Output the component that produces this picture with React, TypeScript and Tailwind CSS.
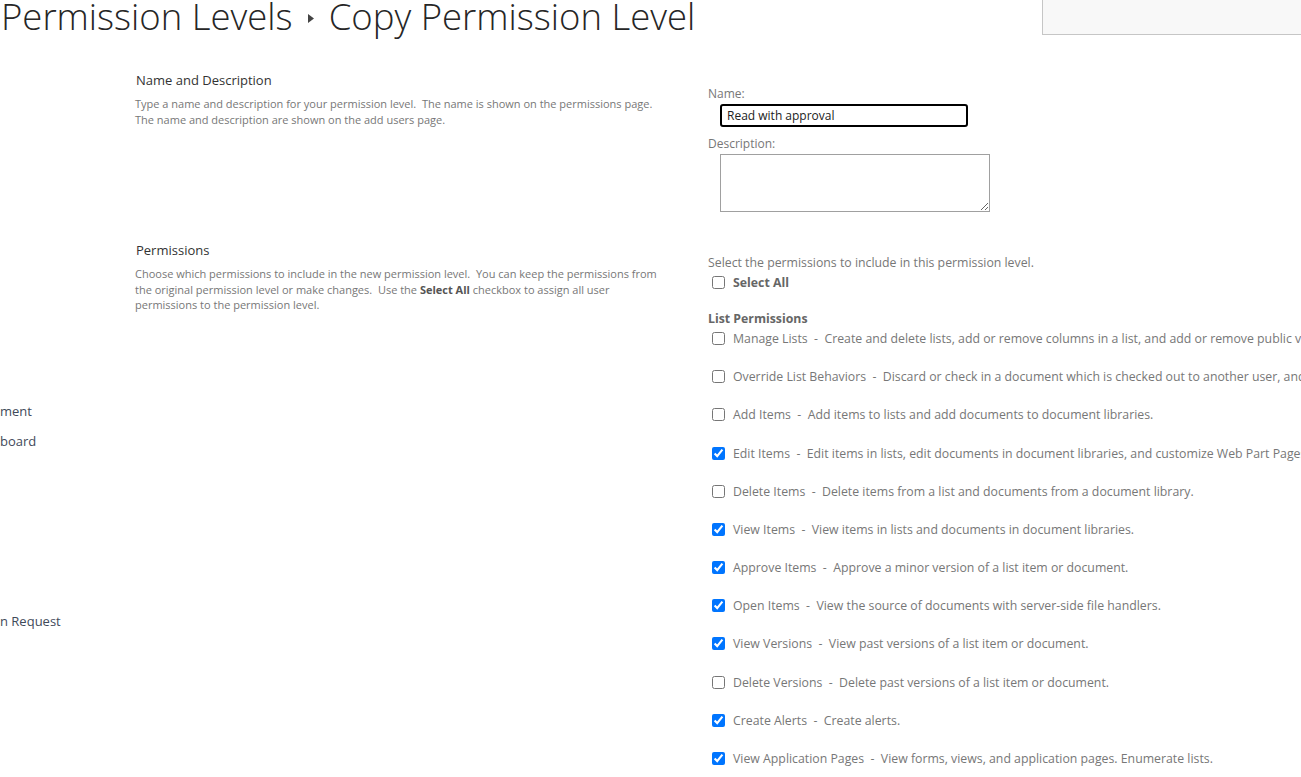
const perms: [string, string, boolean][] = [
  ["Manage Lists", "Create and delete lists, add or remove columns in a list, and add or remove public views of a list.", false],
  ["Override List Behaviors", "Discard or check in a document which is checked out to another user, and change or override settings which allow users to read/edit only their own items", false],
  ["Add Items", "Add items to lists and add documents to document libraries.", false],
  ["Edit Items", "Edit items in lists, edit documents in document libraries, and customize Web Part Pages in document libraries.", true],
  ["Delete Items", "Delete items from a list and documents from a document library.", false],
  ["View Items", "View items in lists and documents in document libraries.", true],
  ["Approve Items", "Approve a minor version of a list item or document.", true],
  ["Open Items", "View the source of documents with server-side file handlers.", true],
  ["View Versions", "View past versions of a list item or document.", true],
  ["Delete Versions", "Delete past versions of a list item or document.", false],
  ["Create Alerts", "Create alerts.", true],
  ["View Application Pages", "View forms, views, and application pages. Enumerate lists.", true],
];

const PermRow = ({ name, desc, checked }: { name: string; desc: string; checked: boolean }) => (
  <div className="flex h-[38.18px] items-start whitespace-nowrap">
    <input type="checkbox" defaultChecked={checked} className="mt-[2px] ml-[4px] h-[13px] w-[13px] shrink-0" />
    <span className="ml-[8px] leading-[18px]">
      {name}&nbsp; - &nbsp;{desc}
    </span>
  </div>
);

export default function App() {
  return (
    <div
      className="relative h-[777px] w-[1301px] overflow-hidden bg-white text-[#777]"
      style={{ fontFamily: '"Open Sans", "Noto Sans", sans-serif' }}
    >
      <div className="flex h-[60px] items-start">
        <h1 className="ml-[1px] mt-[-9px] flex items-center whitespace-nowrap text-[36.5px] font-light leading-[50px] text-[#262626]">
          Permission Levels
          <svg width="6" height="9" viewBox="0 0 6 9" className="mx-[15px] mt-[4px]">
            <path d="M0 0 L6 4.5 L0 9 Z" fill="#444" />
          </svg>
          Copy Permission Level
        </h1>
        <div className="ml-auto h-[35px] w-[259px] border-b border-l border-[#c6c6c6] bg-[#f8f8f8]" />
      </div>

      <div className="flex">
        {/* left nav, scrolled out of view */}
        <div className="w-[135px] shrink-0 text-[13px] text-[#3f4a5a]">
          <div className="mt-[342px] leading-[18px]">ment</div>
          <div className="mt-[12px] leading-[18px]">board</div>
          <div className="mt-[162px] leading-[18px]">n Request</div>
        </div>

        <div className="flex-1">
          {/* Name and Description */}
          <div className="flex">
            <div className="w-[573px] shrink-0">
              <div className="mt-[11px] pl-[1px] text-[13px] leading-[18px] text-[#333]">Name and Description</div>
              <p className="mt-[7px] w-[530px] text-[11px] leading-[16px] text-[#777]">
                Type a name and description for your permission level.&nbsp; The name is shown on the permissions page. The name and description are shown on the add users page.
              </p>
            </div>
            <div className="flex flex-col text-[12px]">
              <label className="mt-[26px] leading-[16px] text-[#777]">Name:</label>
              <input
                defaultValue="Read with approval"
                className="mt-[2px] ml-[12px] h-[23px] w-[248px] rounded-[3px] border-2 border-black px-[5px] text-[12px] text-[#222] outline-none"
              />
              <label className="mt-[9px] leading-[16px] text-[#777]">Description:</label>
              <textarea className="mt-[2px] ml-[12px] h-[58px] w-[270px] border border-[#a0a0a0] outline-none" />
            </div>
          </div>

          {/* Permissions */}
          <div className="mt-[29px] flex">
            <div className="w-[573px] shrink-0">
              <div className="pl-[1px] text-[13px] leading-[18px] text-[#333]">Permissions</div>
              <p className="mt-[7px] w-[530px] text-[11px] leading-[15.5px] text-[#777]">
                Choose which permissions to include in the new permission level.&nbsp; You can keep the permissions from the original permission level or make changes.&nbsp; Use the <b className="font-bold text-[#555]">Select All</b> checkbox to assign all user permissions to the permission level.
              </p>
            </div>
            <div className="flex-1 text-[12.3px] text-[#777]">
              <div className="mt-[13px] leading-[18px]">Select the permissions to include in this permission level.</div>
              <div className="mt-[2px] flex items-start">
                <input type="checkbox" className="mt-[2px] ml-[4px] h-[13px] w-[13px]" />
                <span className="ml-[8px] font-bold leading-[18px] text-[#666]">Select All</span>
              </div>
              <div className="mt-[18px] font-bold leading-[18px] text-[#666]">List Permissions</div>
              <div className="mt-[2px]">
                {perms.map(([n, d, c]) => (
                  <PermRow key={n} name={n} desc={d} checked={c} />
                ))}
              </div>
            </div>
          </div>
        </div>
      </div>
    </div>
  );
}
